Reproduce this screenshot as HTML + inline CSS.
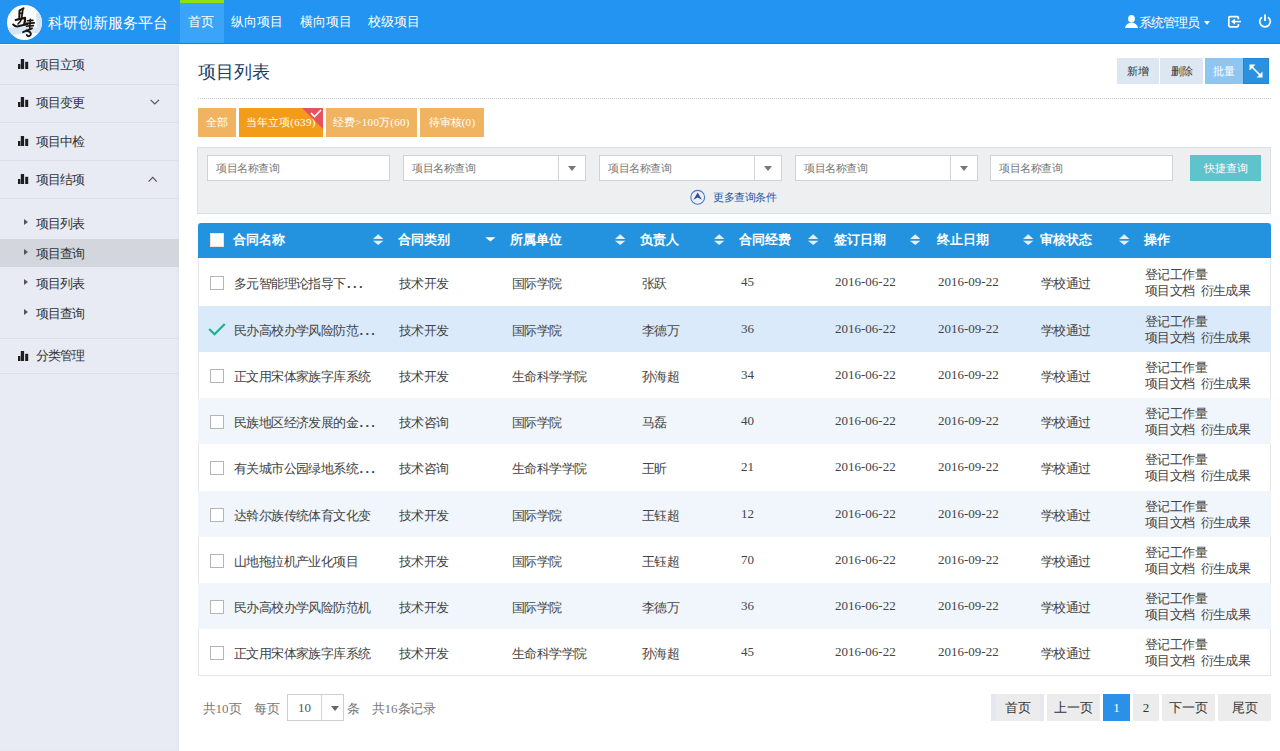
<!DOCTYPE html>
<html><head><meta charset="utf-8">
<style>
*{box-sizing:border-box}
html,body{margin:0;padding:0}
body{width:1280px;height:751px;overflow:hidden;position:relative;background:#fff;font-family:"Liberation Sans",sans-serif;color:#333}
.a{position:absolute;white-space:nowrap}
#top{position:absolute;left:0;top:0;width:1280px;height:44px;background:#2394f1}
#side{position:absolute;left:0;top:45px;width:179px;height:706px;box-shadow:inset -2px 0 2px rgba(0,0,0,0.025);background:#e8ebf3}
.sep{position:absolute;left:0;width:179px;height:1px;background:#dcdfe6}
.nav{position:absolute;top:0;height:44px;line-height:44px;font-size:13px;color:#fff}
.si{position:absolute;left:36px;font-size:13px;letter-spacing:-1.1px;color:#333;line-height:16px}
.ico{position:absolute;left:18px}
.tri{position:absolute;left:24px;width:0;height:0;border-left:4px solid #555;border-top:3.5px solid transparent;border-bottom:3.5px solid transparent}
.fb{position:absolute;top:108px;height:29px;line-height:29px;font-size:11px;color:#fff;background:#f0b461;text-align:center}
.inp{position:absolute;top:155px;height:26px;background:#fff;border:1px solid #d2d2d2;font-size:11px;letter-spacing:-0.4px;color:#777;line-height:24px;padding-left:8px}
.dd{position:absolute;top:0;right:0;width:27px;height:24px;border-left:1px solid #d2d2d2}
.dd:after{content:"";position:absolute;left:9px;top:10px;border-top:5px solid #777;border-left:4px solid transparent;border-right:4px solid transparent}
.th{position:absolute;top:222px;height:35px;line-height:35px;font-size:13px;font-weight:bold;color:#fff}
.sort{position:absolute;top:235px;width:10px;height:11px}
.row{position:absolute;left:198px;width:1073px}
.cb{position:absolute;left:12px;width:14px;height:14px;border:1px solid #b5b5b5;background:#fff}
.td{position:absolute;font-size:13px;letter-spacing:-0.6px;color:#444;line-height:16px}
.dots{letter-spacing:2.3px;margin-left:1.5px;font-weight:bold}
.nf{font-family:'Liberation Serif',serif;font-size:11px;letter-spacing:0.3px}
.num{font-family:"Liberation Serif",serif;font-size:13px;letter-spacing:0}
.td.num{margin-top:-2px}
.pg{position:absolute;top:694px;height:27px;line-height:28px;background:#ececec;font-size:13px;color:#333;text-align:center}
</style></head><body>
<div id="top">
<div class="a" style="left:7px;top:5px;width:35px;height:35px;border-radius:50%;background:#fbfcfe;overflow:hidden">
<svg width="35" height="35" viewBox="0 0 35 35" style="position:absolute;left:0;top:0">
<path d="M0 23.5 Q12 20.5 30 22.5 L29 8 L35 8 L35 28 Q16 27.5 0 31 Z" fill="#d5e6f6"/>

<g stroke="#1c1512" fill="none" stroke-linecap="round" stroke-linejoin="round">
<path d="M16.5 3.3 Q14 4.5 12.5 5.5 L12.3 13.5" stroke-width="2"/>
<path d="M15.8 4.5 L14.8 12" stroke-width="1.8"/>
<path d="M12.5 8.5 L15.5 8" stroke-width="1.4"/>
<path d="M8.7 15 Q13 13.5 18 12.8 Q18.5 15.5 17.3 18.5" stroke-width="2.2"/>
<path d="M14.5 14 Q13.5 17 11 19" stroke-width="1.6"/>
<path d="M6.2 19.5 Q8.5 21.8 11 21.3 Q15 20.3 20.5 19.2" stroke-width="2"/>
<path d="M20.5 15.8 L26 15.4" stroke-width="1.6"/>
<path d="M19.2 18.5 L27.2 17.8" stroke-width="1.8"/>
<path d="M23.3 14.3 L22.8 23" stroke-width="1.6"/>
<path d="M19.5 21.2 L26.5 20.6" stroke-width="1.6"/>
<path d="M16 27.2 L25 23.3" stroke-width="1.8"/>
<path d="M19.5 25.5 Q25 27 23.5 30 Q21.5 32.5 19.8 30" stroke-width="2"/>
</g></svg></div>
<div class="a" style="left:48px;top:14px;font-size:15.2px;line-height:18px;color:#fff">科研创新服务平台</div>
<div class="a" style="left:180px;top:0;width:44px;height:44px;background:#39a4fa"></div>
<div class="a" style="left:0;top:43px;width:1280px;height:1px;background:#0c85ec"></div>
<div class="a" style="left:180px;top:0;width:44px;height:3px;background:#8ee014"></div>
<div class="nav a" style="left:188px">首页</div>
<div class="nav a" style="left:231px">纵向项目</div>
<div class="nav a" style="left:300px">横向项目</div>
<div class="nav a" style="left:368px">校级项目</div>
<svg class="a" style="left:1125px;top:15px" width="13" height="13" viewBox="0 0 13 13">
<ellipse cx="6.5" cy="3.8" rx="3.4" ry="3.8" fill="#fff"/><path d="M0 13 L0.6 11 Q2 8.6 4.8 7.8 L8.2 7.8 Q11 8.6 12.4 11 L13 13 Z" fill="#fff"/></svg>
<div class="a" style="left:1139px;top:15px;font-size:12.5px;letter-spacing:-0.9px;line-height:16px;color:#fff">系统管理员</div>
<div class="a" style="left:1204px;top:21px;border-top:4px solid #fff;border-left:3.5px solid transparent;border-right:3.5px solid transparent;width:0;height:0"></div>
<svg class="a" style="left:1227px;top:15px" width="15" height="14" viewBox="0 0 15 14">
<path d="M11.4 4.3 V2.8 Q11.4 1.6 10.2 1.6 H3 Q1.8 1.6 1.8 2.8 V10.6 Q1.8 11.8 3 11.8 H10.2 Q11.4 11.8 11.4 10.6 V9" stroke="#fff" stroke-width="1.7" fill="none"/>
<path d="M6.5 6.6 H13.9" stroke="#fff" stroke-width="1.6"/><path d="M4 6.6 L8 3.7 L8 9.5 Z" fill="#fff"/></svg>
<svg class="a" style="left:1258px;top:14px" width="14" height="14" viewBox="0 0 14 14">
<path d="M4 3.2 A5.3 5.3 0 1 0 10 3.2" stroke="#fff" stroke-width="1.8" fill="none"/><path d="M7 0.5 V7" stroke="#fff" stroke-width="1.8"/></svg>
</div>
<div id="side"></div>
<div class="sep" style="top:84px"></div>
<div class="sep" style="top:122px"></div>
<div class="sep" style="top:160px"></div>
<div class="sep" style="top:198px"></div>
<div class="sep" style="top:338px"></div>
<div class="sep" style="top:373px"></div>
<div class="a" style="left:0;top:239px;width:179px;height:28px;background:#d3d7dd"></div>
<svg class="a" style="left:18px;top:59px" width="11" height="10" viewBox="0 0 11 10"><rect x="0" y="5" width="2.4" height="5" fill="#1e1e1e"/><rect x="2.8" y="0" width="3.3" height="10" fill="#1e1e1e"/><rect x="7.2" y="2.8" width="3" height="7.2" fill="#1e1e1e"/></svg>
<div class="si a" style="top:57px">项目立项</div>
<svg class="a" style="left:18px;top:97px" width="11" height="10" viewBox="0 0 11 10"><rect x="0" y="5" width="2.4" height="5" fill="#1e1e1e"/><rect x="2.8" y="0" width="3.3" height="10" fill="#1e1e1e"/><rect x="7.2" y="2.8" width="3" height="7.2" fill="#1e1e1e"/></svg>
<div class="si a" style="top:95px">项目变更</div>
<svg class="a" style="left:18px;top:136px" width="11" height="10" viewBox="0 0 11 10"><rect x="0" y="5" width="2.4" height="5" fill="#1e1e1e"/><rect x="2.8" y="0" width="3.3" height="10" fill="#1e1e1e"/><rect x="7.2" y="2.8" width="3" height="7.2" fill="#1e1e1e"/></svg>
<div class="si a" style="top:134px">项目中检</div>
<svg class="a" style="left:18px;top:174px" width="11" height="10" viewBox="0 0 11 10"><rect x="0" y="5" width="2.4" height="5" fill="#1e1e1e"/><rect x="2.8" y="0" width="3.3" height="10" fill="#1e1e1e"/><rect x="7.2" y="2.8" width="3" height="7.2" fill="#1e1e1e"/></svg>
<div class="si a" style="top:172px">项目结项</div>
<svg class="a" style="left:18px;top:351px" width="11" height="10" viewBox="0 0 11 10"><rect x="0" y="5" width="2.4" height="5" fill="#1e1e1e"/><rect x="2.8" y="0" width="3.3" height="10" fill="#1e1e1e"/><rect x="7.2" y="2.8" width="3" height="7.2" fill="#1e1e1e"/></svg>
<div class="si a" style="top:348px">分类管理</div>
<svg class="a" style="left:150px;top:99px" width="10" height="7" viewBox="0 0 10 7"><path d="M0.6 0.8 L4.8 5 L9 0.8" stroke="#555" stroke-width="1.2" fill="none"/></svg>
<svg class="a" style="left:148px;top:176px" width="10" height="7" viewBox="0 0 10 7"><path d="M0.6 5.6 L4.7 1.3 L8.8 5.6" stroke="#555" stroke-width="1.2" fill="none"/></svg>
<div class="tri" style="top:219px"></div>
<div class="si a" style="top:216px">项目列表</div>
<div class="tri" style="top:249px"></div>
<div class="si a" style="top:246px">项目查询</div>
<div class="tri" style="top:279px"></div>
<div class="si a" style="top:276px">项目列表</div>
<div class="tri" style="top:309px"></div>
<div class="si a" style="top:306px">项目查询</div>
<div class="a" style="left:198px;top:61px;font-size:18px;line-height:22px;color:#1b3e63">项目列表</div>
<div class="a" style="left:1117px;top:58px;width:42px;height:26px;background:#dce7f2;font-size:11px;line-height:26px;text-align:center;color:#333">新增</div>
<div class="a" style="left:1160px;top:58px;width:43px;height:26px;background:#dce7f2;font-size:11px;line-height:26px;text-align:center;color:#333">删除</div>
<div class="a" style="left:1205px;top:58px;width:38px;height:26px;background:#8fc6f1;font-size:11px;line-height:26px;text-align:center;color:#fff">批量</div>
<div class="a" style="left:1243px;top:58px;width:26px;height:26px;background:#2a90e0;border:1px solid #1f86d8"></div>
<svg class="a" style="left:1249px;top:64px" width="14" height="14" viewBox="0 0 14 14">
<path d="M2.5 2.5 L11.5 11.5" stroke="#fff" stroke-width="1.7"/><path d="M0.5 0.5 h6 l-6 6 Z M13.5 13.5 h-6 l6 -6 Z" fill="#fff"/></svg>
<div class="a" style="left:198px;top:98px;width:1073px;height:1px;border-top:1px dotted #c8c8c8"></div>
<div class="fb a" style="left:198px;width:38px">全部</div>
<div class="fb a" style="left:239px;width:84px;background:#f39c1a;overflow:hidden">当年立项<span class=nf>(639)</span><div class="a" style="right:0;top:0;width:0;height:0;border-top:21px solid #e9525c;border-left:21px solid transparent"></div><svg class="a" style="right:1px;top:1px" width="12" height="9" viewBox="0 0 12 9"><path d="M1 4 L4.5 7.5 L11 1" stroke="#fff" stroke-width="1.6" fill="none"/></svg></div>
<div class="fb a" style="left:326px;width:91px">经费<span class=nf>&gt;100</span>万<span class=nf>(60)</span></div>
<div class="fb a" style="left:420px;width:64px">待审核<span class=nf>(0)</span></div>
<div class="a" style="left:197px;top:147px;width:1074px;height:67px;background:#eeeff1;border:1px solid #dcdfe4"></div>
<div class="inp a" style="left:207px;width:183px">项目名称查询</div>
<div class="inp a" style="left:403px;width:183px">项目名称查询<div class="dd"></div></div>
<div class="inp a" style="left:599px;width:183px">项目名称查询<div class="dd"></div></div>
<div class="inp a" style="left:795px;width:183px">项目名称查询<div class="dd"></div></div>
<div class="inp a" style="left:990px;width:183px">项目名称查询</div>
<div class="a" style="left:1190px;top:155px;width:71px;height:26px;background:#5fc3cc;color:#fff;font-size:11px;line-height:26px;text-align:center">快捷查询</div>
<svg class="a" style="left:690px;top:189px" width="16" height="16" viewBox="0 0 16 16">
<circle cx="7.7" cy="8.3" r="6.9" stroke="#4a78c4" stroke-width="1.1" fill="none"/><path d="M3.4 10.8 L7.7 3.6 L11.9 10.8 L7.7 8.4 Z" fill="#2250a8"/></svg>
<div class="a" style="left:713px;top:190px;font-size:11px;letter-spacing:-0.4px;line-height:14px;color:#2456a8">更多查询条件</div>
<div class="a" style="left:198px;top:223px;width:1073px;height:35px;background:#2393df;border-radius:3px 3px 0 0"></div>
<div class="a" style="left:198px;top:258px;width:1073px;height:418px;border:1px solid #e6e6e6;border-top:none;background:#fff"></div>
<div class="a" style="left:210px;top:233px;width:14px;height:14px;background:#fff;border:1px solid #f0e0d0"></div>
<div class="th a" style="left:233px">合同名称</div>
<svg class="a" style="left:373px;top:234px" width="11" height="12" viewBox="0 0 11 12"><path d="M0 4.9 L5.2 0.3 L10.4 4.9 Z" fill="#e3effb"/><path d="M0 6.7 L5.2 11.1 L10.4 6.7 Z" fill="#e3effb"/></svg>
<div class="th a" style="left:398px">合同类别</div>
<div class="th a" style="left:510px">所属单位</div>
<svg class="a" style="left:615px;top:234px" width="11" height="12" viewBox="0 0 11 12"><path d="M0 4.9 L5.2 0.3 L10.4 4.9 Z" fill="#e3effb"/><path d="M0 6.7 L5.2 11.1 L10.4 6.7 Z" fill="#e3effb"/></svg>
<div class="th a" style="left:640px">负责人</div>
<svg class="a" style="left:714px;top:234px" width="11" height="12" viewBox="0 0 11 12"><path d="M0 4.9 L5.2 0.3 L10.4 4.9 Z" fill="#e3effb"/><path d="M0 6.7 L5.2 11.1 L10.4 6.7 Z" fill="#e3effb"/></svg>
<div class="th a" style="left:739px">合同经费</div>
<svg class="a" style="left:808px;top:234px" width="11" height="12" viewBox="0 0 11 12"><path d="M0 4.9 L5.2 0.3 L10.4 4.9 Z" fill="#e3effb"/><path d="M0 6.7 L5.2 11.1 L10.4 6.7 Z" fill="#e3effb"/></svg>
<div class="th a" style="left:834px">签订日期</div>
<svg class="a" style="left:910px;top:234px" width="11" height="12" viewBox="0 0 11 12"><path d="M0 4.9 L5.2 0.3 L10.4 4.9 Z" fill="#e3effb"/><path d="M0 6.7 L5.2 11.1 L10.4 6.7 Z" fill="#e3effb"/></svg>
<div class="th a" style="left:937px">终止日期</div>
<svg class="a" style="left:1023px;top:234px" width="11" height="12" viewBox="0 0 11 12"><path d="M0 4.9 L5.2 0.3 L10.4 4.9 Z" fill="#e3effb"/><path d="M0 6.7 L5.2 11.1 L10.4 6.7 Z" fill="#e3effb"/></svg>
<div class="th a" style="left:1040px">审核状态</div>
<svg class="a" style="left:1119px;top:234px" width="11" height="12" viewBox="0 0 11 12"><path d="M0 4.9 L5.2 0.3 L10.4 4.9 Z" fill="#e3effb"/><path d="M0 6.7 L5.2 11.1 L10.4 6.7 Z" fill="#e3effb"/></svg>
<div class="th a" style="left:1144px">操作</div>
<svg class="a" style="left:485px;top:237px" width="11" height="5" viewBox="0 0 11 5"><path d="M0.3 0.2 L10.5 0.2 L5.4 4.6 Z" fill="#fff"/></svg>
<div class="a" style="left:198px;top:258px;width:1073px;height:48px;background:transparent"></div>
<div class="cb a" style="left:210px;top:276px"></div>
<div class="td a" style="left:234px;top:276px">多元智能理论指导下<span class=dots>...</span></div>
<div class="td a" style="left:399px;top:276px">技术开发</div>
<div class="td a" style="left:512px;top:276px">国际学院</div>
<div class="td a" style="left:642px;top:276px">张跃</div>
<div class="td a num" style="left:741px;top:276px">45</div>
<div class="td a num" style="left:835px;top:276px">2016-06-22</div>
<div class="td a num" style="left:938px;top:276px">2016-09-22</div>
<div class="td a" style="left:1041px;top:276px">学校通过</div>
<div class="td a" style="left:1145px;top:267px">登记工作量</div>
<div class="td a" style="left:1145px;top:283px">项目文档&nbsp;&nbsp;衍生成果</div>
<div class="a" style="left:198px;top:306px;width:1073px;height:46px;background:#dbeafa"></div>
<svg class="a" style="left:208px;top:323px" width="18" height="13" viewBox="0 0 18 13"><path d="M1.2 6 L6.5 11.2 L16.8 1" stroke="#1bb18c" stroke-width="2.2" fill="none"/></svg>
<div class="td a" style="left:234px;top:323px">民办高校办学风险防范<span class=dots>...</span></div>
<div class="td a" style="left:399px;top:323px">技术开发</div>
<div class="td a" style="left:512px;top:323px">国际学院</div>
<div class="td a" style="left:642px;top:323px">李德万</div>
<div class="td a num" style="left:741px;top:323px">36</div>
<div class="td a num" style="left:835px;top:323px">2016-06-22</div>
<div class="td a num" style="left:938px;top:323px">2016-09-22</div>
<div class="td a" style="left:1041px;top:323px">学校通过</div>
<div class="td a" style="left:1145px;top:314px">登记工作量</div>
<div class="td a" style="left:1145px;top:330px">项目文档&nbsp;&nbsp;衍生成果</div>
<div class="a" style="left:198px;top:352px;width:1073px;height:46px;background:transparent"></div>
<div class="cb a" style="left:210px;top:369px"></div>
<div class="td a" style="left:234px;top:369px">正文用宋体家族字库系统</div>
<div class="td a" style="left:399px;top:369px">技术开发</div>
<div class="td a" style="left:512px;top:369px">生命科学学院</div>
<div class="td a" style="left:642px;top:369px">孙海超</div>
<div class="td a num" style="left:741px;top:369px">34</div>
<div class="td a num" style="left:835px;top:369px">2016-06-22</div>
<div class="td a num" style="left:938px;top:369px">2016-09-22</div>
<div class="td a" style="left:1041px;top:369px">学校通过</div>
<div class="td a" style="left:1145px;top:360px">登记工作量</div>
<div class="td a" style="left:1145px;top:376px">项目文档&nbsp;&nbsp;衍生成果</div>
<div class="a" style="left:198px;top:398px;width:1073px;height:46px;background:#f0f6fb"></div>
<div class="cb a" style="left:210px;top:415px"></div>
<div class="td a" style="left:234px;top:415px">民族地区经济发展的金<span class=dots>...</span></div>
<div class="td a" style="left:399px;top:415px">技术咨询</div>
<div class="td a" style="left:512px;top:415px">国际学院</div>
<div class="td a" style="left:642px;top:415px">马磊</div>
<div class="td a num" style="left:741px;top:415px">40</div>
<div class="td a num" style="left:835px;top:415px">2016-06-22</div>
<div class="td a num" style="left:938px;top:415px">2016-09-22</div>
<div class="td a" style="left:1041px;top:415px">学校通过</div>
<div class="td a" style="left:1145px;top:406px">登记工作量</div>
<div class="td a" style="left:1145px;top:422px">项目文档&nbsp;&nbsp;衍生成果</div>
<div class="a" style="left:198px;top:444px;width:1073px;height:47px;background:transparent"></div>
<div class="cb a" style="left:210px;top:461px"></div>
<div class="td a" style="left:234px;top:461px">有关城市公园绿地系统<span class=dots>...</span></div>
<div class="td a" style="left:399px;top:461px">技术咨询</div>
<div class="td a" style="left:512px;top:461px">生命科学学院</div>
<div class="td a" style="left:642px;top:461px">王昕</div>
<div class="td a num" style="left:741px;top:461px">21</div>
<div class="td a num" style="left:835px;top:461px">2016-06-22</div>
<div class="td a num" style="left:938px;top:461px">2016-09-22</div>
<div class="td a" style="left:1041px;top:461px">学校通过</div>
<div class="td a" style="left:1145px;top:452px">登记工作量</div>
<div class="td a" style="left:1145px;top:468px">项目文档&nbsp;&nbsp;衍生成果</div>
<div class="a" style="left:198px;top:491px;width:1073px;height:46px;background:#f0f6fb"></div>
<div class="cb a" style="left:210px;top:508px"></div>
<div class="td a" style="left:234px;top:508px">达斡尔族传统体育文化变</div>
<div class="td a" style="left:399px;top:508px">技术开发</div>
<div class="td a" style="left:512px;top:508px">国际学院</div>
<div class="td a" style="left:642px;top:508px">王钰超</div>
<div class="td a num" style="left:741px;top:508px">12</div>
<div class="td a num" style="left:835px;top:508px">2016-06-22</div>
<div class="td a num" style="left:938px;top:508px">2016-09-22</div>
<div class="td a" style="left:1041px;top:508px">学校通过</div>
<div class="td a" style="left:1145px;top:499px">登记工作量</div>
<div class="td a" style="left:1145px;top:515px">项目文档&nbsp;&nbsp;衍生成果</div>
<div class="a" style="left:198px;top:537px;width:1073px;height:46px;background:transparent"></div>
<div class="cb a" style="left:210px;top:554px"></div>
<div class="td a" style="left:234px;top:554px">山地拖拉机产业化项目</div>
<div class="td a" style="left:399px;top:554px">技术开发</div>
<div class="td a" style="left:512px;top:554px">国际学院</div>
<div class="td a" style="left:642px;top:554px">王钰超</div>
<div class="td a num" style="left:741px;top:554px">70</div>
<div class="td a num" style="left:835px;top:554px">2016-06-22</div>
<div class="td a num" style="left:938px;top:554px">2016-09-22</div>
<div class="td a" style="left:1041px;top:554px">学校通过</div>
<div class="td a" style="left:1145px;top:545px">登记工作量</div>
<div class="td a" style="left:1145px;top:561px">项目文档&nbsp;&nbsp;衍生成果</div>
<div class="a" style="left:198px;top:583px;width:1073px;height:46px;background:#f0f6fb"></div>
<div class="cb a" style="left:210px;top:600px"></div>
<div class="td a" style="left:234px;top:600px">民办高校办学风险防范机</div>
<div class="td a" style="left:399px;top:600px">技术开发</div>
<div class="td a" style="left:512px;top:600px">国际学院</div>
<div class="td a" style="left:642px;top:600px">李德万</div>
<div class="td a num" style="left:741px;top:600px">36</div>
<div class="td a num" style="left:835px;top:600px">2016-06-22</div>
<div class="td a num" style="left:938px;top:600px">2016-09-22</div>
<div class="td a" style="left:1041px;top:600px">学校通过</div>
<div class="td a" style="left:1145px;top:591px">登记工作量</div>
<div class="td a" style="left:1145px;top:607px">项目文档&nbsp;&nbsp;衍生成果</div>
<div class="a" style="left:198px;top:629px;width:1073px;height:46px;background:transparent"></div>
<div class="cb a" style="left:210px;top:646px"></div>
<div class="td a" style="left:234px;top:646px">正文用宋体家族字库系统</div>
<div class="td a" style="left:399px;top:646px">技术开发</div>
<div class="td a" style="left:512px;top:646px">生命科学学院</div>
<div class="td a" style="left:642px;top:646px">孙海超</div>
<div class="td a num" style="left:741px;top:646px">45</div>
<div class="td a num" style="left:835px;top:646px">2016-06-22</div>
<div class="td a num" style="left:938px;top:646px">2016-09-22</div>
<div class="td a" style="left:1041px;top:646px">学校通过</div>
<div class="td a" style="left:1145px;top:637px">登记工作量</div>
<div class="td a" style="left:1145px;top:653px">项目文档&nbsp;&nbsp;衍生成果</div>
<div class="a" style="left:203px;top:701px;font-size:12.5px;letter-spacing:-0.5px;line-height:16px;color:#777">共<span class="num">10</span>页</div>
<div class="a" style="left:254px;top:701px;font-size:12.5px;letter-spacing:-0.5px;line-height:16px;color:#777">每页</div>
<div class="a" style="left:287px;top:694px;width:57px;height:27px;border:1px solid #cfcfcf;background:#fff"><span class="a num" style="left:10px;top:5px;color:#555">10</span><div class="a" style="left:33px;top:0;width:1px;height:25px;background:#d5d5d5"></div><div class="a" style="left:43px;top:11px;border-top:5px solid #666;border-left:4px solid transparent;border-right:4px solid transparent;width:0;height:0"></div></div>
<div class="a" style="left:347px;top:701px;font-size:12.5px;letter-spacing:-0.5px;line-height:16px;color:#777">条</div>
<div class="a" style="left:372px;top:701px;font-size:12.5px;letter-spacing:-0.5px;line-height:16px;color:#777">共<span class="num">16</span>条记录</div>
<div class="pg a" style="left:991px;width:53px;background:#ececec;box-shadow:inset 5px 0 0 #e3e8f1,inset -4px 0 0 #e3e8f1">首页</div>
<div class="pg a" style="left:1047px;width:53px;">上一页</div>
<div class="pg a num" style="left:1103px;width:27px;background:#2b90e8;color:#fff">1</div>
<div class="pg a num" style="left:1133px;width:26px;">2</div>
<div class="pg a" style="left:1162px;width:53px;">下一页</div>
<div class="pg a" style="left:1218px;width:53px;">尾页</div>
</body></html>
